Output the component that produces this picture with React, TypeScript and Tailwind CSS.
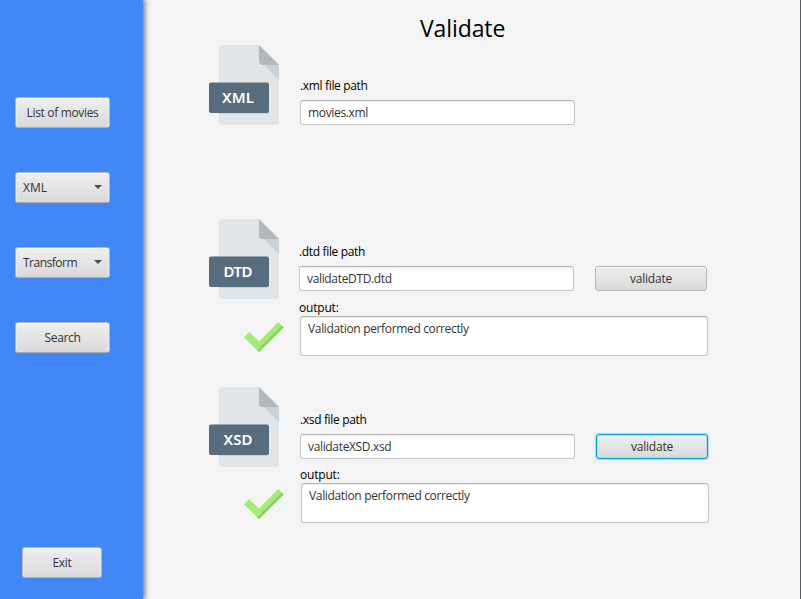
import React from "react";

const sideButton =
  "flex h-[31px] shrink-0 items-center rounded-[3px] border border-[#b5b5b5] border-b-[#a9adb4] bg-linear-to-b from-[#efefef] to-[#d9d9d9] text-[#333] shadow-[inset_0_1px_0_#fafafa,inset_1px_0_0_#eeeeee,inset_-1px_0_0_#eeeeee]";

function FileIcon({ label }: { label: string }) {
  return (
    <svg width="70" height="80" viewBox="0 0 70 80" className="block tracking-normal">
      <path d="M14 0H50L70 20V76a4 4 0 0 1-4 4H14a4 4 0 0 1-4-4V4a4 4 0 0 1 4-4Z" fill="#e1e5e8" />
      <path d="M54 19L70 35V20L68 18Z" fill="#cad1d9" />
      <path d="M50 0L70 20H54a4 4 0 0 1-4-4Z" fill="#b0b7bd" />
      <path d="M10 66H60V67a2 2 0 0 1-2 2H10Z" fill="#cad1d9" />
      <rect x="0" y="37.5" width="60" height="30.5" rx="2" fill="#576d7e" />
      <text
        x="29"
        y="57.8"
        textAnchor="middle"
        textLength={label === "XML" ? 32 : 29}
        fontFamily="'Noto Sans', 'Open Sans', sans-serif"
        fontSize="15"
        fontWeight="600"
        fill="#fff"
      >
        {label}
      </text>
    </svg>
  );
}

function CheckMark() {
  return (
    <svg width="40" height="30" viewBox="0 0 40 30" className="block">
      <path d="M0 15.5L5.3 10L15 19.5L34.3 0L39.7 5.4L15 30Z" fill="#a4eb75" />
      <path d="M37.7 3.4L39.7 5.4L15 30L13 28L14.5 27Z" fill="#8fd065" />
    </svg>
  );
}

function Caret() {
  return (
    <svg width="8" height="4" viewBox="0 0 8 4" className="mb-[2px] block">
      <path d="M0 0H8L4 4Z" fill="#4d4d4d" />
    </svg>
  );
}

function Field({ value }: { value: string }) {
  return (
    <div className="flex h-[25px] w-[275px] items-center rounded-[3px] border border-[#c8c8c8] border-t-[#b6b6b6] bg-white pl-[7px] text-[#333] shadow-[inset_0_1px_1px_#ededed]">
      {value}
    </div>
  );
}

function Output() {
  return (
    <div className="h-[40px] w-[408px] rounded-[3px] border border-[#c8c8c8] border-t-[#b6b6b6] bg-white pt-[4px] pl-[7px] leading-4 text-[#333] shadow-[inset_0_1px_2px_#e6e6e6]">
      Validation performed correctly
    </div>
  );
}

function ValidateButton({ focused = false }: { focused?: boolean }) {
  const look = focused
    ? "border-[#039ed3] shadow-[0_0_1px_1px_#a8dcee,inset_0_0_0_1px_#bcd9e3]"
    : "border-[#b5b5b5] shadow-[inset_0_1px_0_#f8f8f8]";
  return (
    <button
      className={`h-[25px] w-[112px] rounded-[3px] border bg-linear-to-b from-[#eeeeee] to-[#d9d9d9] leading-4 tracking-[-0.2px] text-[#333] ${look}`}
    >
      validate
    </button>
  );
}

export default function App() {
  return (
    <div className="flex h-[599px] w-[801px] overflow-hidden border-r border-[#565a62] bg-[#f4f4f4] font-['Open_Sans','Noto_Sans',sans-serif] text-[12px] leading-4 tracking-[-0.34px] text-black">
      <aside className="z-10 flex w-[143px] shrink-0 flex-col bg-[#4287f7] pt-[97px] shadow-[1px_0_5px_1px_#777]">
        <nav className="ml-[15px] flex w-[95px] flex-col gap-[44px]">
          <button className={`${sideButton} justify-center`}>List of movies</button>
          <button className={`${sideButton} justify-between px-[7px] tracking-normal`}>
            XML <Caret />
          </button>
          <button className={`${sideButton} justify-between px-[7px] tracking-[-0.5px]`}>
            Transform <Caret />
          </button>
          <button className={`${sideButton} justify-center`}>Search</button>
        </nav>
        <button className={`${sideButton} mt-auto mb-[21px] ml-[22px] w-[80px] justify-center`}>
          Exit
        </button>
      </aside>

      <main className="flex min-w-0 flex-1 flex-col pl-[66px]">
        <h1 className="h-[45px] pt-[12px] pl-[211px] text-[23px] leading-8 tracking-[-0.1px]">
          Validate
        </h1>

        <section className="flex h-[174px] gap-[21px]">
          <FileIcon label="XML" />
          <div className="pt-[33px]">
            <div className="mb-[6px]">.xml file path</div>
            <Field value="movies.xml" />
          </div>
        </section>

        <section className="h-[168px]">
          <div className="flex h-[97px] gap-[20px]">
            <FileIcon label="DTD" />
            <div className="pt-[25px]">
              <div className="mb-[6px]">.dtd file path</div>
              <div className="flex gap-[21px]">
                <Field value="validateDTD.dtd" />
                <ValidateButton />
              </div>
              <div className="mt-[9px] tracking-[-0.2px]">output:</div>
            </div>
          </div>
          <div className="flex items-start gap-[16px] pl-[35px]">
            <div className="pt-[6px]">
              <CheckMark />
            </div>
            <Output />
          </div>
        </section>

        <section>
          <div className="flex h-[96px] gap-[21px]">
            <FileIcon label="XSD" />
            <div className="pt-[25px]">
              <div className="mb-[6px]">.xsd file path</div>
              <div className="flex gap-[21px]">
                <Field value="validateXSD.xsd" />
                <ValidateButton focused />
              </div>
              <div className="mt-[8px] tracking-[-0.2px]">output:</div>
            </div>
          </div>
          <div className="flex items-start gap-[17px] pl-[35px]">
            <div className="pt-[6px]">
              <CheckMark />
            </div>
            <Output />
          </div>
        </section>
      </main>
    </div>
  );
}
